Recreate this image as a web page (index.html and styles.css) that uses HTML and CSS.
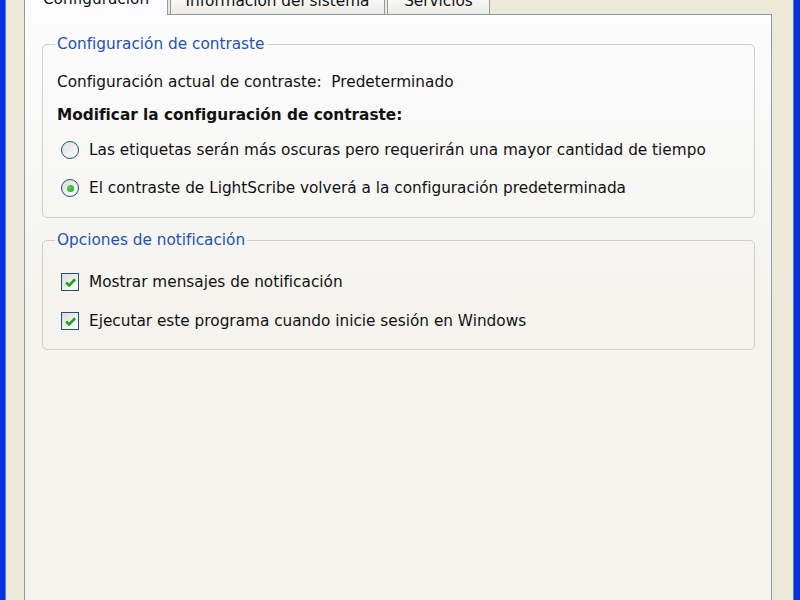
FILE: index.html
```html
<!DOCTYPE html>
<html lang="es">
<head>
    <meta charset="UTF-8">
    <title>LightScribe - Configuración</title>
    <link rel="stylesheet" href="styles.css">
</head>
<body>
    <div class="window">
        <div class="frame frame-left"></div>
        <div class="gutter gutter-left"></div>

        <div class="main">
            <div class="tabs">
                <div class="tab active">Configuración</div>
                <div class="tab tab-info">Información del sistema</div>
                <div class="tab tab-services">Servicios</div>
                <div class="tab-fill"></div>
            </div>

            <div class="panel">
                <fieldset class="group group-contrast">
                    <legend>Configuración de contraste</legend>
                    <div class="row info">Configuración actual de contraste:&nbsp; Predeterminado</div>
                    <div class="row heading">Modificar la configuración de contraste:</div>
                    <div class="options">
                        <label class="row option">
                            <span class="radio"></span>
                            Las etiquetas serán más oscuras pero requerirán una mayor cantidad de tiempo
                        </label>
                        <label class="row option">
                            <span class="radio checked"></span>
                            El contraste de LightScribe volverá a la configuración predeterminada
                        </label>
                    </div>
                </fieldset>

                <fieldset class="group group-notify">
                    <legend>Opciones de notificación</legend>
                    <div class="options">
                        <label class="row option">
                            <span class="check">
                                <svg viewBox="0 0 12 12" width="13" height="13"><path d="M2 6 L4.7 8.7 L10.2 3" fill="none" stroke="#21a121" stroke-width="2.4"/></svg>
                            </span>
                            Mostrar mensajes de notificación
                        </label>
                        <label class="row option">
                            <span class="check">
                                <svg viewBox="0 0 12 12" width="13" height="13"><path d="M2 6 L4.7 8.7 L10.2 3" fill="none" stroke="#21a121" stroke-width="2.4"/></svg>
                            </span>
                            Ejecutar este programa cuando inicie sesión en Windows
                        </label>
                    </div>
                </fieldset>
            </div>
        </div>

        <div class="gutter gutter-right"></div>
        <div class="frame frame-right"></div>
    </div>
</body>
</html>
```

FILE: styles.css
```css
html, body {
    margin: 0;
    height: 100%;
    overflow: hidden;
}

body {
    font-family: "DejaVu Sans", Tahoma, sans-serif;
    font-size: 15.3px;
    color: #111;
    background-color: #ece9d8;
}

.window {
    display: flex;
    height: 600px;
}

.window > div {
    flex: none;
}

/* blue XP window frame */
.frame {
    background-color: #0831d9;
}

.frame-left {
    width: 6px;
    box-shadow: inset -1px 0 #4a80f5;
}

.frame-right {
    width: 7px;
    box-shadow: inset 1px 0 #4a80f5;
}

.gutter {
    background-color: #ece9d8;
}

.gutter-left {
    width: 18px;
}

.gutter-right {
    width: 21px;
}

.main {
    width: 748px;
    display: flex;
    flex-direction: column;
}

/* Tab strip */
.tabs {
    display: flex;
    align-items: flex-end;
    height: 24px;
    margin-top: -10px;
    position: relative;
    z-index: 1;
}

.tab {
    height: 23px;
    line-height: 21px;
    margin-left: 2px;
    border: 1px solid #919b9c;
    border-bottom: none;
    border-radius: 3px 3px 0 0;
    background: linear-gradient(#ffffff, #ecebe6);
    white-space: nowrap;
    text-align: center;
}

.tab.active {
    width: 142px;
    margin-left: 0;
    height: 25px;
    margin-bottom: -1px;
    line-height: 19px;
    background: #fcfcfe;
}

.tab-info {
    width: 213px;
}

.tab-services {
    width: 101px;
}

.tab-fill {
    flex: 1;
}

/* Tab body */
.panel {
    flex: 1;
    display: flex;
    flex-direction: column;
    padding-top: 20px;
    border-top: 1px solid #919b9c;
    border-left: 1px solid #919b9c;
    border-right: 1px solid #919b9c;
    box-shadow: 1px 0 #d0d0bf;
    background: linear-gradient(#fcfcfe, #f4f3ee 300px);
}

.group {
    margin: 0 16px 0 17px;
    padding: 0 12px;
    border: 1px solid #d0d0bf;
    border-radius: 5px;
}

.group legend {
    padding: 0 2px;
    line-height: 18px;
    color: #1f52b4;
}

.group-contrast {
    padding-top: 17px;
    padding-bottom: 17px;
}

.group-notify {
    margin-top: 13px;
    padding-top: 21px;
    padding-bottom: 16px;
}

.row {
    display: flex;
    align-items: center;
    height: 24px;
    padding-left: 2px;
}

.heading {
    margin-top: 9px;
    font-weight: bold;
}

.options {
    display: flex;
    flex-direction: column;
    gap: 14px;
}

.group-contrast .options {
    margin-top: 11px;
}

.group-notify .options {
    gap: 15px;
}

.option {
    padding-left: 6px;
}

/* radio buttons */
.radio {
    width: 16px;
    height: 16px;
    margin-right: 10px;
    border: 1px solid #1c5180;
    border-radius: 50%;
    background: linear-gradient(135deg, #dcdcd7, #ffffff);
    display: flex;
    align-items: center;
    justify-content: center;
}

.radio.checked::after {
    content: "";
    width: 7px;
    height: 7px;
    border-radius: 50%;
    background: radial-gradient(circle at 35% 35%, #55d551, #21a121);
}

/* check boxes */
.check {
    width: 16px;
    height: 16px;
    margin-right: 10px;
    border: 1px solid #1c5180;
    background: linear-gradient(135deg, #dcdcd7, #ffffff);
    display: flex;
    align-items: center;
    justify-content: center;
}
```
